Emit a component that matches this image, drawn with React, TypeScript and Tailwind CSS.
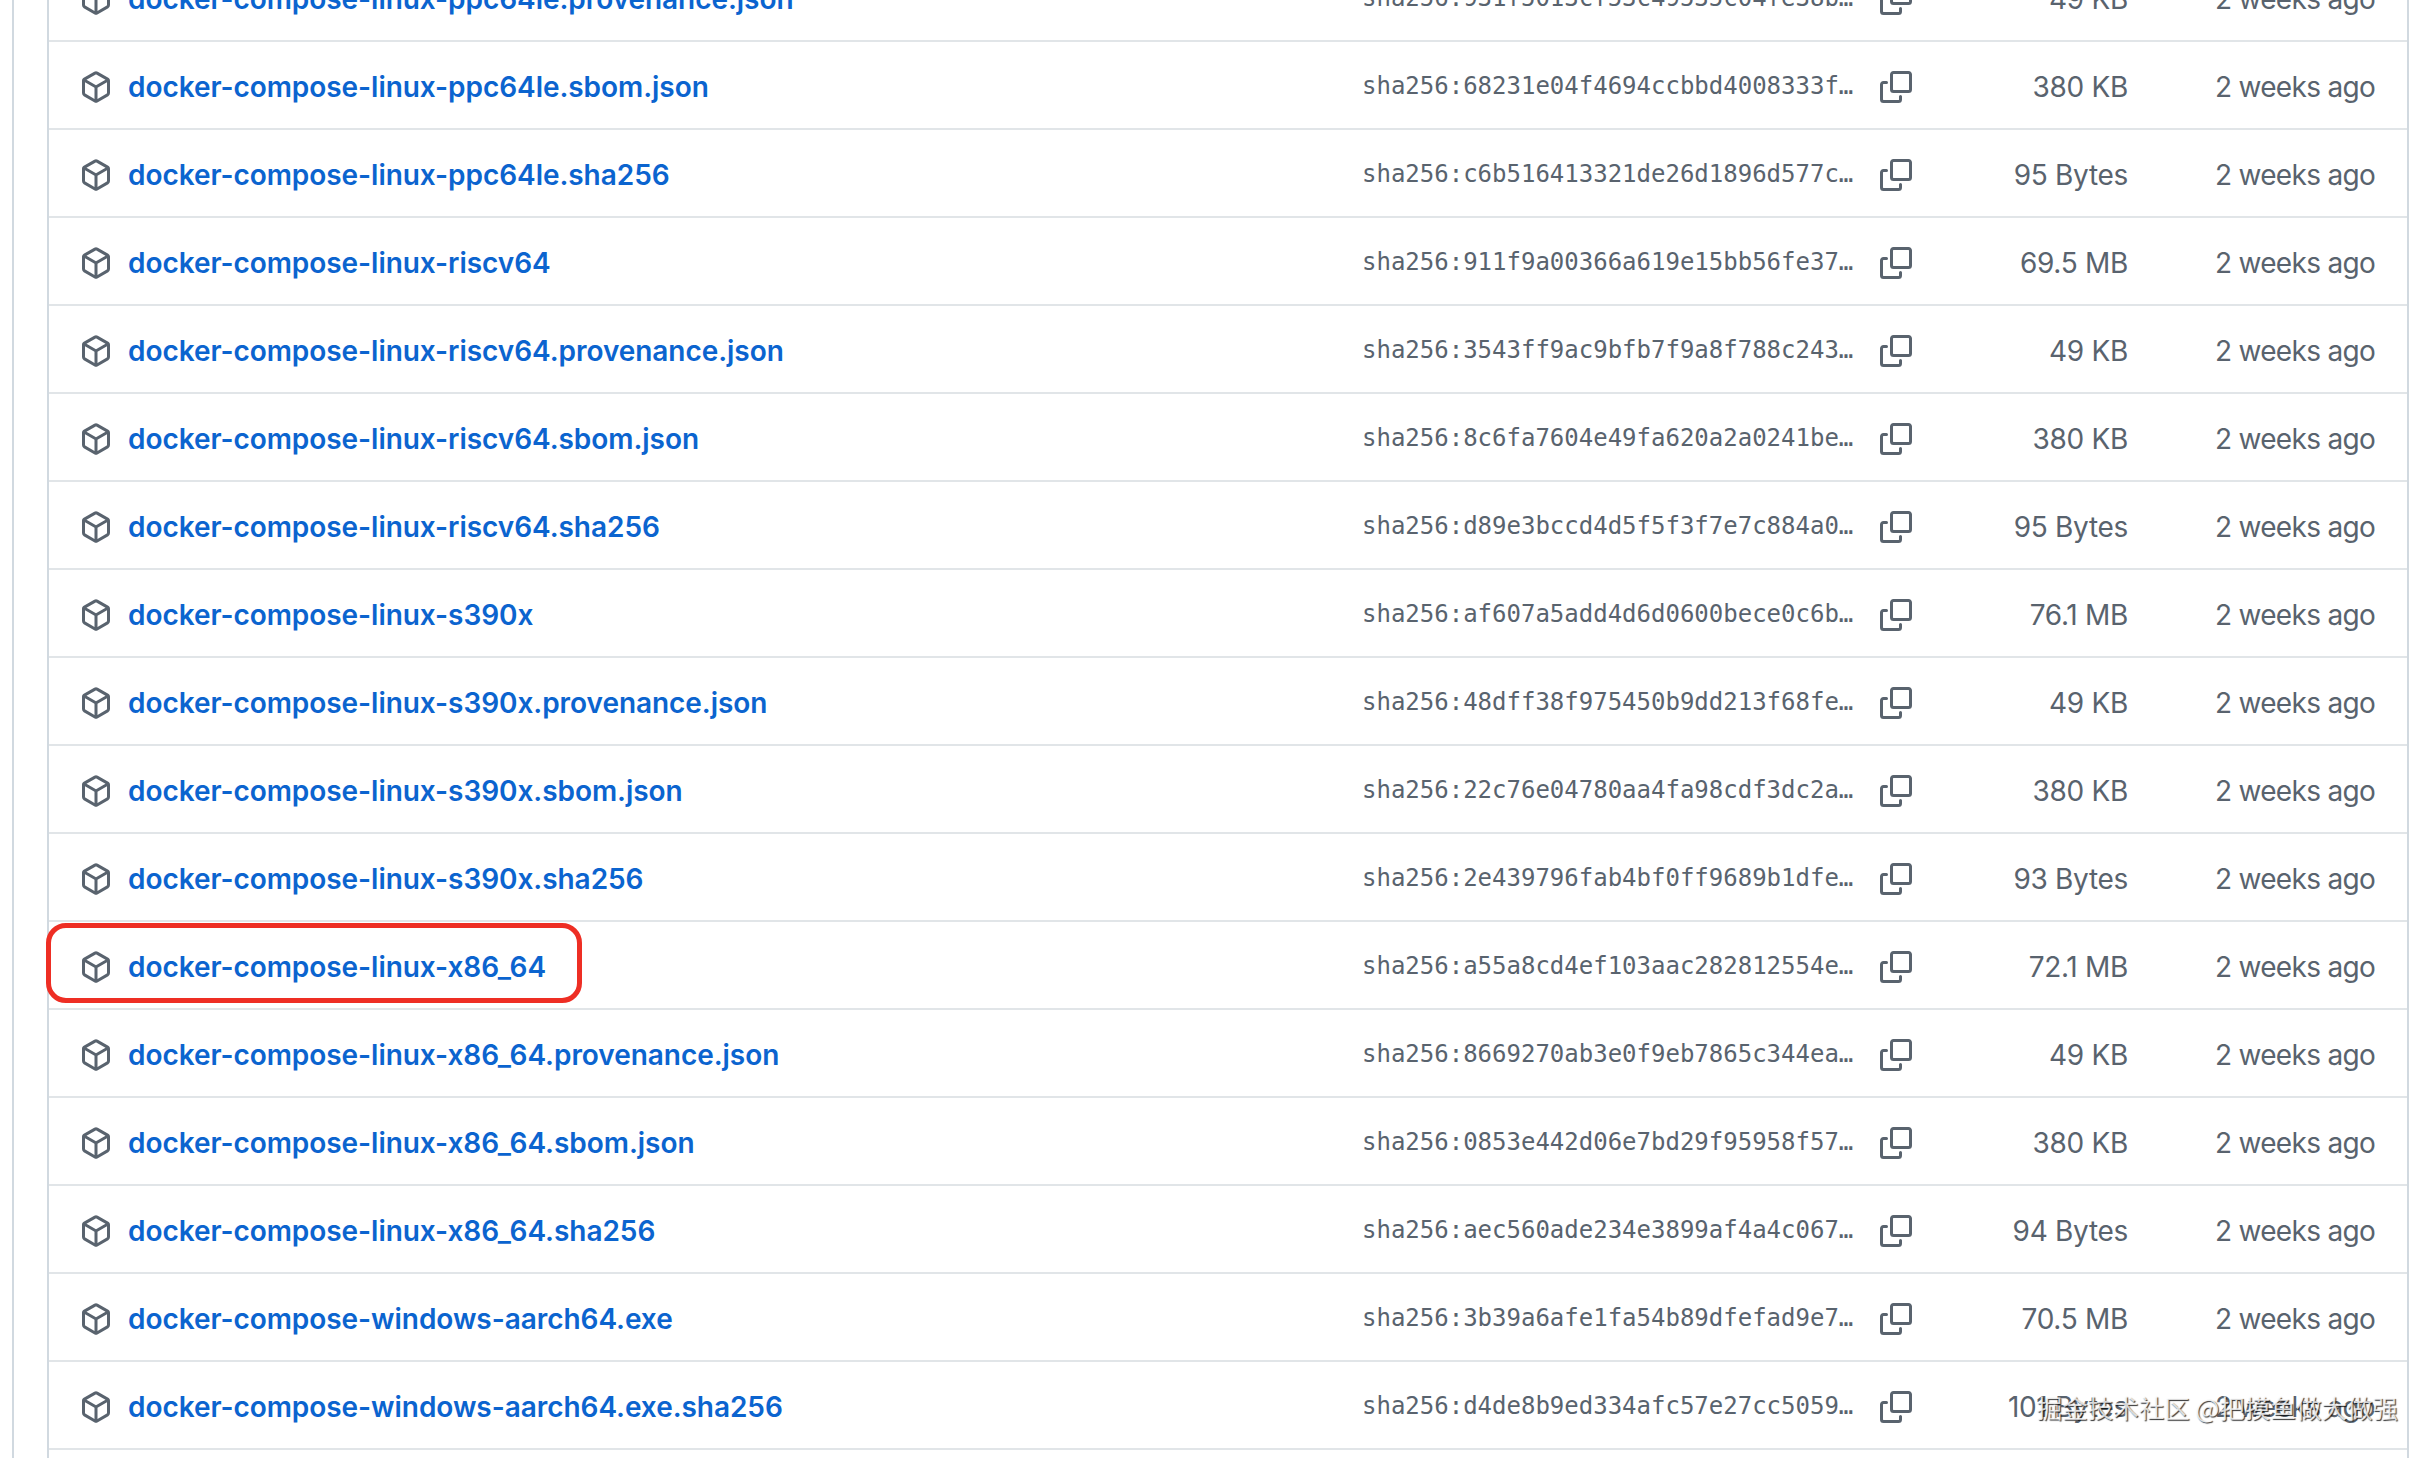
const rows = [
    { name: "docker-compose-linux-ppc64le.provenance.json", hash: "931f5013cf53c49535c04fe38b", size: "49 KB" },
    { name: "docker-compose-linux-ppc64le.sbom.json", hash: "68231e04f4694ccbbd4008333f", size: "380 KB" },
    { name: "docker-compose-linux-ppc64le.sha256", hash: "c6b516413321de26d1896d577c", size: "95 Bytes" },
    { name: "docker-compose-linux-riscv64", hash: "911f9a00366a619e15bb56fe37", size: "69.5 MB" },
    { name: "docker-compose-linux-riscv64.provenance.json", hash: "3543ff9ac9bfb7f9a8f788c243", size: "49 KB" },
    { name: "docker-compose-linux-riscv64.sbom.json", hash: "8c6fa7604e49fa620a2a0241be", size: "380 KB" },
    { name: "docker-compose-linux-riscv64.sha256", hash: "d89e3bccd4d5f5f3f7e7c884a0", size: "95 Bytes" },
    { name: "docker-compose-linux-s390x", hash: "af607a5add4d6d0600bece0c6b", size: "76.1 MB" },
    { name: "docker-compose-linux-s390x.provenance.json", hash: "48dff38f975450b9dd213f68fe", size: "49 KB" },
    { name: "docker-compose-linux-s390x.sbom.json", hash: "22c76e04780aa4fa98cdf3dc2a", size: "380 KB" },
    { name: "docker-compose-linux-s390x.sha256", hash: "2e439796fab4bf0ff9689b1dfe", size: "93 Bytes" },
    { name: "docker-compose-linux-x86_64", hash: "a55a8cd4ef103aac282812554e", size: "72.1 MB" },
    { name: "docker-compose-linux-x86_64.provenance.json", hash: "8669270ab3e0f9eb7865c344ea", size: "49 KB" },
    { name: "docker-compose-linux-x86_64.sbom.json", hash: "0853e442d06e7bd29f95958f57", size: "380 KB" },
    { name: "docker-compose-linux-x86_64.sha256", hash: "aec560ade234e3899af4a4c067", size: "94 Bytes" },
    { name: "docker-compose-windows-aarch64.exe", hash: "3b39a6afe1fa54b89dfefad9e7", size: "70.5 MB" },
    { name: "docker-compose-windows-aarch64.exe.sha256", hash: "d4de8b9ed334afc57e27cc5059", size: "101 Bytes" },
];

function PackageIcon() {
    return (
        <svg viewBox="0 0 16 16" fill="#59636e" className="w-8 h-8 shrink-0">
            <path d="m8.878.392 5.25 3.045c.54.314.872.89.872 1.514v6.098a1.75 1.75 0 0 1-.872 1.514l-5.25 3.045a1.75 1.75 0 0 1-1.756 0l-5.25-3.045A1.75 1.75 0 0 1 1 11.049V4.951c0-.624.332-1.201.872-1.514L7.122.392a1.75 1.75 0 0 1 1.756 0ZM7.875 1.69l-4.63 2.685L8 7.133l4.755-2.758-4.63-2.685a.248.248 0 0 0-.25 0ZM2.5 5.677v5.372c0 .09.047.171.125.216l4.625 2.683V8.432Zm6.25 8.271 4.625-2.683a.25.25 0 0 0 .125-.216V5.677L8.75 8.432Z" />
        </svg>
    );
}

function CopyIcon() {
    return (
        <svg viewBox="0 0 16 16" fill="#59636e" className="w-8 h-8 shrink-0 ml-[27px]">
            <path d="M0 6.75C0 5.784.784 5 1.75 5h1.5a.75.75 0 0 1 0 1.5h-1.5a.25.25 0 0 0-.25.25v7.5c0 .138.112.25.25.25h7.5a.25.25 0 0 0 .25-.25v-1.5a.75.75 0 0 1 1.5 0v1.5A1.75 1.75 0 0 1 9.25 16h-7.5A1.75 1.75 0 0 1 0 14.25Z" />
            <path d="M5 1.75C5 .784 5.784 0 6.75 0h7.5C15.216 0 16 .784 16 1.75v7.5A1.75 1.75 0 0 1 14.25 11h-7.5A1.75 1.75 0 0 1 5 9.25Zm1.75-.25a.25.25 0 0 0-.25.25v7.5c0 .138.112.25.25.25h7.5a.25.25 0 0 0 .25-.25v-7.5a.25.25 0 0 0-.25-.25Z" />
        </svg>
    );
}

type RowProps = {
    name: string;
    hash: string;
    size: string;
};

function AssetRow({ name, hash, size }: RowProps) {
    return (
        <div className="h-[88px] shrink-0 flex items-center pt-1 pl-[31px] pr-[31px] border-b-2 border-[#e1e5e8]">
            <PackageIcon />
            <a className="flex-1 ml-4 text-[28px] font-semibold tracking-[-0.05px] text-[#0b64cf] font-['Inter',sans-serif] whitespace-nowrap">
                {name}
            </a>
            <span className="w-[491px] -mt-0.5 text-2xl text-[#59636e] font-['DejaVu_Sans_Mono',monospace] whitespace-nowrap overflow-hidden">
                sha256:{hash}…
            </span>
            <CopyIcon />
            <span className="w-[216px] text-right text-[28px] tracking-[-0.3px] text-[#59636e] font-['Inter',sans-serif] whitespace-nowrap">
                {size}
            </span>
            <span className="w-[248px] pr-px text-right text-[28px] tracking-[-0.7px] text-[#59636e] font-['Inter',sans-serif] whitespace-nowrap">
                2 weeks ago
            </span>
        </div>
    );
}

export default function App() {
    return (
        <div className="relative h-[1458px] overflow-hidden bg-white pl-3">
            <div className="h-full pl-[33px] border-l-2 border-[#d1d9e0]">
                <div className="w-[2362px] h-full overflow-hidden border-x-2 border-[#d1d9e0]">
                    <div className="-mt-[46px] flex flex-col">
                        {rows.map((row) => (
                            <AssetRow key={row.name} {...row} />
                        ))}
                    </div>
                </div>
            </div>
            <div className="absolute left-[46px] top-[923px] w-[536px] h-[80px] border-[5px] border-[#ee2e24] rounded-[20px]" />
            <div className="absolute right-[36px] top-[1388px] text-[25.5px] text-white/80 [text-shadow:1px_1px_1px_rgba(0,0,0,0.8)] font-['Noto_Sans_CJK_SC',sans-serif] whitespace-nowrap">
                掘金技术社区 @把摸鱼做大做强
            </div>
        </div>
    );
}
